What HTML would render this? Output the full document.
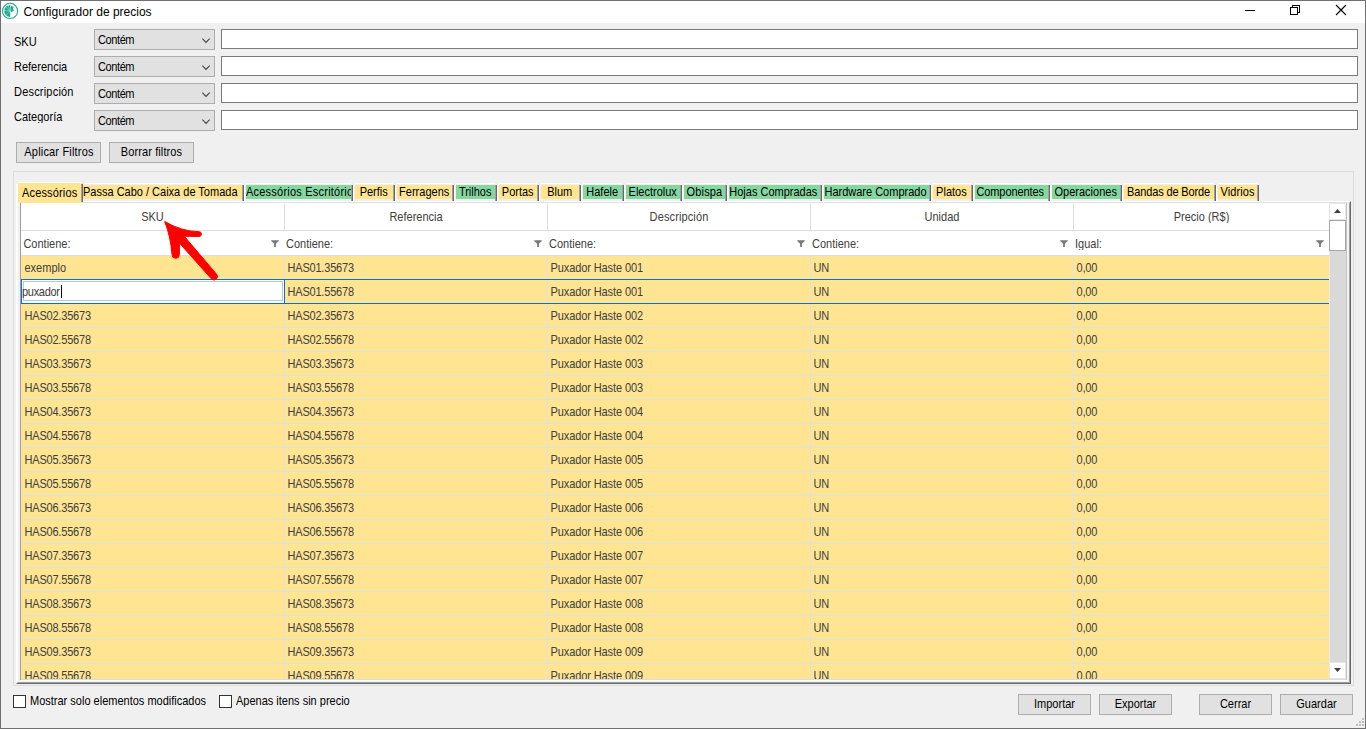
<!DOCTYPE html><html><head><meta charset="utf-8"><title>Configurador de precios</title><style>
*{box-sizing:border-box;margin:0;padding:0}
html,body{width:1366px;height:729px;overflow:hidden;background:#f0f0f0}
body{position:relative;font-family:"Liberation Sans",sans-serif;font-size:11px;color:#000;line-height:13px}
.a{position:absolute}
.t{position:absolute;white-space:nowrap;line-height:13px;height:13px;transform:scaleY(1.1);transform-origin:0 2px}
.combo{position:absolute;left:94px;width:121px;height:21px;background:#e1e1e1;border:1px solid #adadad}
.combo span{position:absolute;left:3px;top:3px;white-space:nowrap;letter-spacing:-0.4px;transform:scaleY(1.1);transform-origin:0 2px}
.combo svg{position:absolute;left:107px;top:8px}
.inp{position:absolute;left:221px;width:1137px;height:20px;background:#fff;border:1px solid #7a7a7a}
.btn{position:absolute;height:21px;background:#e1e1e1;border:1px solid #adadad;text-align:center;line-height:19px;white-space:nowrap}
.btn span{display:inline-block;transform:translateY(-1px) scaleY(1.1);transform-origin:50% 35%}
.fill span{display:inline-block;transform:translateY(-0.6px) scaleY(1.1);transform-origin:50% 35%}
.tab{position:absolute;top:183px;height:18px}
.tab .hl{position:absolute;left:0;top:2px;width:1px;bottom:0;background:#fff}
.tab .ht{position:absolute;left:2px;right:2px;top:0;height:1px;background:#fff}
.tab .fill{position:absolute;left:2px;right:2px;top:2px;height:14px;overflow:hidden;text-align:center;white-space:nowrap;line-height:14px}
.tab .g1{position:absolute;right:1px;top:2px;bottom:0;width:1px;background:#a0a0a0}
.tab .g2{position:absolute;right:0;top:2px;bottom:0;width:1px;background:#696969}
.hdr{position:absolute;top:203px;height:27px;text-align:center;line-height:27px;color:#404040;white-space:nowrap;transform:scaleY(1.1);transform-origin:50% 9px}
.flt{position:absolute;top:231px;height:24px;line-height:24px;color:#404040;white-space:nowrap;padding-left:1px;transform:scaleY(1.1);transform-origin:0 8px}
.row{position:absolute;left:21px;width:1308px;height:24px;background:#ffe492;border-bottom:1px solid #e0e0de}
.c{position:absolute;top:0;height:23px;line-height:23px;color:#404040;white-space:nowrap;padding-left:3.5px;letter-spacing:-0.2px;transform:scaleY(1.1);transform-origin:0 7px}
.c.d{letter-spacing:-0.1px}
.vs{position:absolute;width:1px;background:#dcdcdc}
</style></head><body>
<div class="a" style="left:1px;top:1px;width:1364px;height:22px;background:#fff"></div>
<svg class="a" style="left:1px;top:2px" width="19" height="19" viewBox="0 0 19 19">
<circle cx="9.05" cy="8.9" r="7.6" fill="#fff" stroke="#1aab8f" stroke-width="1.1"/>
<path d="M9.2 9 L9.2 2.9 A6 6 0 0 0 3.2 9 A6 6 0 0 0 9.2 15.1 Z" fill="#1aab8f"/>
<path d="M9.2 9 L9.9 3.6 L12.8 5.2 L11.8 6.6 L12.9 8.6 L10.6 9.9 Z" fill="#1aab8f"/>
<path d="M9.2 9 L4.6 4.6 M9.2 9 L3 8.6 M9.2 9 L5 13.4 M9.2 9 L7 3.2" stroke="#fff" stroke-width="0.5" fill="none" opacity=".8"/>
</svg>
<div class="t" style="left:23.5px;top:4px;font-size:12px;line-height:14px;height:14px">Configurador de precios</div>
<div class="a" style="left:1245px;top:10px;width:10px;height:1px;background:#000"></div>
<svg class="a" style="left:1289px;top:4px" width="12" height="12" viewBox="0 0 12 12" shape-rendering="crispEdges">
<rect x="1.5" y="3.5" width="7" height="7" fill="none" stroke="#000" stroke-width="1"/>
<path d="M3.5 3.5 V1.5 H10.5 V8.5 H8.5" fill="none" stroke="#000" stroke-width="1"/></svg>
<svg class="a" style="left:1335px;top:4px" width="12" height="12" viewBox="0 0 12 12">
<path d="M1 1 L11 11 M11 1 L1 11" stroke="#000" stroke-width="1.1" fill="none"/></svg>
<div class="t" style="left:14px;top:35px">SKU</div>
<div class="t" style="left:14px;top:60px">Referencia</div>
<div class="t" style="left:14px;top:85px;letter-spacing:0.2px">Descripción</div>
<div class="t" style="left:14px;top:110px">Categoría</div>
<div class="combo" style="top:29px"><span>Contém</span><svg width="8" height="6" viewBox="0 0 8 6"><path d="M0.3 0.6 L4 4.5 L7.7 0.6" stroke="#404040" stroke-width="1.15" fill="none"/></svg></div>
<div class="inp" style="top:29px"></div>
<div class="combo" style="top:56px"><span>Contém</span><svg width="8" height="6" viewBox="0 0 8 6"><path d="M0.3 0.6 L4 4.5 L7.7 0.6" stroke="#404040" stroke-width="1.15" fill="none"/></svg></div>
<div class="inp" style="top:56px"></div>
<div class="combo" style="top:83px"><span>Contém</span><svg width="8" height="6" viewBox="0 0 8 6"><path d="M0.3 0.6 L4 4.5 L7.7 0.6" stroke="#404040" stroke-width="1.15" fill="none"/></svg></div>
<div class="inp" style="top:83px"></div>
<div class="combo" style="top:110px"><span>Contém</span><svg width="8" height="6" viewBox="0 0 8 6"><path d="M0.3 0.6 L4 4.5 L7.7 0.6" stroke="#404040" stroke-width="1.15" fill="none"/></svg></div>
<div class="inp" style="top:110px"></div>
<div class="btn" style="left:16px;top:142px;width:85px"><span style="letter-spacing:0.18px;margin-left:1px">Aplicar Filtros</span></div>
<div class="btn" style="left:109px;top:142px;width:85px"><span style="letter-spacing:0.1px">Borrar filtros</span></div>
<div class="a" style="left:13px;top:171px;width:1341px;height:515px;border:1px solid #dcdcdc"></div>
<div class="a" style="left:16px;top:201px;width:1335px;height:483px;border-left:1px solid #fff;border-top:1px solid #fff;border-right:1px solid #696969;border-bottom:1px solid #696969"></div>
<div class="a" style="left:17px;top:202px;width:1333px;height:481px;border-left:1px solid #fcfcfc;border-top:1px solid #e0e0e0;border-right:1px solid #a0a0a0;border-bottom:1px solid #a0a0a0"></div>
<div class="a" style="left:18px;top:183px;width:65px;height:20px;background:#ffe492"></div>
<div class="a" style="left:16px;top:184px;width:2px;height:19px;background:#fff"></div>
<div class="a" style="left:18px;top:182px;width:63px;height:1px;background:#fff"></div>
<div class="a" style="left:81px;top:184px;width:1px;height:18px;background:#a0a0a0"></div>
<div class="a" style="left:82px;top:184px;width:1px;height:18px;background:#696969"></div>
<div class="t" style="left:22px;top:186px;letter-spacing:0.15px">Acessórios</div>
<div class="tab" style="left:83px;width:161px"><div class="hl"></div><div class="ht"></div><div class="fill" style="background:#ffe492;text-align:left;padding-left:0;left:0;"><span style="transform:translate(0,-0.6px) scaleY(1.1)">Passa Cabo / Caixa de Tomada</span></div><div class="g1"></div><div class="g2"></div></div>
<div class="tab" style="left:244px;width:109px"><div class="hl"></div><div class="ht"></div><div class="fill" style="background:#85d7a0;text-align:left;"><span style="transform:translate(0,-0.6px) scaleY(1.1);letter-spacing:0.22px">Acessórios Escritório</span></div><div class="g1"></div><div class="g2"></div></div>
<div class="tab" style="left:353px;width:42px"><div class="hl"></div><div class="ht"></div><div class="fill" style="background:#ffe492;"><span style="transform:translate(-0.3px,-0.6px) scaleY(1.1);letter-spacing:0px">Perfis</span></div><div class="g1"></div><div class="g2"></div></div>
<div class="tab" style="left:395px;width:59px"><div class="hl"></div><div class="ht"></div><div class="fill" style="background:#ffe492;"><span style="transform:translate(-0.3px,-0.6px) scaleY(1.1);letter-spacing:0px">Ferragens</span></div><div class="g1"></div><div class="g2"></div></div>
<div class="tab" style="left:454px;width:43px"><div class="hl"></div><div class="ht"></div><div class="fill" style="background:#85d7a0;"><span style="transform:translate(-0.3px,-0.6px) scaleY(1.1);letter-spacing:0px">Trilhos</span></div><div class="g1"></div><div class="g2"></div></div>
<div class="tab" style="left:497px;width:42px"><div class="hl"></div><div class="ht"></div><div class="fill" style="background:#ffe492;"><span style="transform:translate(-0.3px,-0.6px) scaleY(1.1);letter-spacing:0px">Portas</span></div><div class="g1"></div><div class="g2"></div></div>
<div class="tab" style="left:539px;width:42px"><div class="hl"></div><div class="ht"></div><div class="fill" style="background:#ffe492;"><span style="transform:translate(-0.3px,-0.6px) scaleY(1.1);letter-spacing:0px">Blum</span></div><div class="g1"></div><div class="g2"></div></div>
<div class="tab" style="left:581px;width:43px"><div class="hl"></div><div class="ht"></div><div class="fill" style="background:#85d7a0;"><span style="transform:translate(-0.3px,-0.6px) scaleY(1.1);letter-spacing:0px">Hafele</span></div><div class="g1"></div><div class="g2"></div></div>
<div class="tab" style="left:624px;width:58px"><div class="hl"></div><div class="ht"></div><div class="fill" style="background:#85d7a0;"><span style="transform:translate(-0.3px,-0.6px) scaleY(1.1);letter-spacing:0px">Electrolux</span></div><div class="g1"></div><div class="g2"></div></div>
<div class="tab" style="left:682px;width:45px"><div class="hl"></div><div class="ht"></div><div class="fill" style="background:#85d7a0;"><span style="transform:translate(0px,-0.6px) scaleY(1.1);letter-spacing:0.15px">Obispa</span></div><div class="g1"></div><div class="g2"></div></div>
<div class="tab" style="left:727px;width:95px"><div class="hl"></div><div class="ht"></div><div class="fill" style="background:#85d7a0;"><span style="transform:translate(-1.2px,-0.6px) scaleY(1.1);letter-spacing:0px">Hojas Compradas</span></div><div class="g1"></div><div class="g2"></div></div>
<div class="tab" style="left:822px;width:109px"><div class="hl"></div><div class="ht"></div><div class="fill" style="background:#85d7a0;"><span style="transform:translate(-1px,-0.6px) scaleY(1.1);letter-spacing:0px">Hardware Comprado</span></div><div class="g1"></div><div class="g2"></div></div>
<div class="tab" style="left:931px;width:42px"><div class="hl"></div><div class="ht"></div><div class="fill" style="background:#ffe492;"><span style="transform:translate(-0.6px,-0.6px) scaleY(1.1);letter-spacing:0px">Platos</span></div><div class="g1"></div><div class="g2"></div></div>
<div class="tab" style="left:973px;width:77px"><div class="hl"></div><div class="ht"></div><div class="fill" style="background:#85d7a0;"><span style="transform:translate(-1.3px,-0.6px) scaleY(1.1);letter-spacing:-0.08px">Componentes</span></div><div class="g1"></div><div class="g2"></div></div>
<div class="tab" style="left:1050px;width:72px"><div class="hl"></div><div class="ht"></div><div class="fill" style="background:#85d7a0;"><span style="transform:translate(-0.3px,-0.6px) scaleY(1.1);letter-spacing:0px">Operaciones</span></div><div class="g1"></div><div class="g2"></div></div>
<div class="tab" style="left:1122px;width:94px"><div class="hl"></div><div class="ht"></div><div class="fill" style="background:#ffe492;"><span style="transform:translate(-0.5px,-0.6px) scaleY(1.1);letter-spacing:-0.15px">Bandas de Borde</span></div><div class="g1"></div><div class="g2"></div></div>
<div class="tab" style="left:1216px;width:43px"><div class="hl"></div><div class="ht"></div><div class="fill" style="background:#ffe492;"><span style="transform:translate(0px,-0.6px) scaleY(1.1);letter-spacing:0.1px">Vidrios</span></div><div class="g1"></div><div class="g2"></div></div>
<div class="a" style="left:20px;top:203px;width:1px;height:477px;background:#a0a0a0"></div>
<div class="a" style="left:21px;top:203px;width:1308px;height:53px;background:#fff"></div>
<div class="a" style="left:21px;top:230px;width:1308px;height:1px;background:#dcdcdc"></div>
<div class="a" style="left:21px;top:255px;width:1308px;height:1px;background:#dcdcdc"></div>
<div class="hdr" style="left:21px;width:263px">SKU</div>
<div class="flt" style="left:21px;width:263px;padding-left:2.4px">Contiene:</div>
<div class="a" style="left:271px;top:240px;line-height:0"><svg width="8" height="7" viewBox="0 0 8 7"><path d="M0.2 0.2 H7.8 V1 L4.9 3.8 V7 H3.1 V3.8 L0.2 1 Z" fill="#7a7a7a"/></svg></div>
<div class="vs" style="left:284px;top:204px;height:26px"></div>
<div class="hdr" style="left:285px;width:262px">Referencia</div>
<div class="flt" style="left:285px;width:262px">Contiene:</div>
<div class="a" style="left:534px;top:240px;line-height:0"><svg width="8" height="7" viewBox="0 0 8 7"><path d="M0.2 0.2 H7.8 V1 L4.9 3.8 V7 H3.1 V3.8 L0.2 1 Z" fill="#7a7a7a"/></svg></div>
<div class="vs" style="left:547px;top:204px;height:26px"></div>
<div class="hdr" style="left:548px;width:262px;letter-spacing:0.12px">Descripción</div>
<div class="flt" style="left:548px;width:262px">Contiene:</div>
<div class="a" style="left:797px;top:240px;line-height:0"><svg width="8" height="7" viewBox="0 0 8 7"><path d="M0.2 0.2 H7.8 V1 L4.9 3.8 V7 H3.1 V3.8 L0.2 1 Z" fill="#7a7a7a"/></svg></div>
<div class="vs" style="left:810px;top:204px;height:26px"></div>
<div class="hdr" style="left:811px;width:262px">Unidad</div>
<div class="flt" style="left:811px;width:262px">Contiene:</div>
<div class="a" style="left:1060px;top:240px;line-height:0"><svg width="8" height="7" viewBox="0 0 8 7"><path d="M0.2 0.2 H7.8 V1 L4.9 3.8 V7 H3.1 V3.8 L0.2 1 Z" fill="#7a7a7a"/></svg></div>
<div class="vs" style="left:1073px;top:204px;height:26px"></div>
<div class="hdr" style="left:1074px;width:255px">Precio (R$)</div>
<div class="flt" style="left:1074px;width:255px">Igual:</div>
<div class="a" style="left:1316px;top:240px;line-height:0"><svg width="8" height="7" viewBox="0 0 8 7"><path d="M0.2 0.2 H7.8 V1 L4.9 3.8 V7 H3.1 V3.8 L0.2 1 Z" fill="#7a7a7a"/></svg></div>
<div class="a" style="left:0;top:0;width:1366px;height:679px;overflow:hidden">
<div class="row" style="top:256px"><div class="c" style="left:0;letter-spacing:0">exemplo</div><div class="c" style="left:263px">HAS01.35673</div><div class="c d" style="left:526px">Puxador Haste 001</div><div class="c" style="left:789px">UN</div><div class="c" style="left:1052px">0,00</div></div>
<div class="row" style="top:280px"><div class="c" style="left:0"></div><div class="c" style="left:263px">HAS01.55678</div><div class="c d" style="left:526px">Puxador Haste 001</div><div class="c" style="left:789px">UN</div><div class="c" style="left:1052px">0,00</div></div>
<div class="row" style="top:304px"><div class="c" style="left:0">HAS02.35673</div><div class="c" style="left:263px">HAS02.35673</div><div class="c d" style="left:526px">Puxador Haste 002</div><div class="c" style="left:789px">UN</div><div class="c" style="left:1052px">0,00</div></div>
<div class="row" style="top:328px"><div class="c" style="left:0">HAS02.55678</div><div class="c" style="left:263px">HAS02.55678</div><div class="c d" style="left:526px">Puxador Haste 002</div><div class="c" style="left:789px">UN</div><div class="c" style="left:1052px">0,00</div></div>
<div class="row" style="top:352px"><div class="c" style="left:0">HAS03.35673</div><div class="c" style="left:263px">HAS03.35673</div><div class="c d" style="left:526px">Puxador Haste 003</div><div class="c" style="left:789px">UN</div><div class="c" style="left:1052px">0,00</div></div>
<div class="row" style="top:376px"><div class="c" style="left:0">HAS03.55678</div><div class="c" style="left:263px">HAS03.55678</div><div class="c d" style="left:526px">Puxador Haste 003</div><div class="c" style="left:789px">UN</div><div class="c" style="left:1052px">0,00</div></div>
<div class="row" style="top:400px"><div class="c" style="left:0">HAS04.35673</div><div class="c" style="left:263px">HAS04.35673</div><div class="c d" style="left:526px">Puxador Haste 004</div><div class="c" style="left:789px">UN</div><div class="c" style="left:1052px">0,00</div></div>
<div class="row" style="top:424px"><div class="c" style="left:0">HAS04.55678</div><div class="c" style="left:263px">HAS04.55678</div><div class="c d" style="left:526px">Puxador Haste 004</div><div class="c" style="left:789px">UN</div><div class="c" style="left:1052px">0,00</div></div>
<div class="row" style="top:448px"><div class="c" style="left:0">HAS05.35673</div><div class="c" style="left:263px">HAS05.35673</div><div class="c d" style="left:526px">Puxador Haste 005</div><div class="c" style="left:789px">UN</div><div class="c" style="left:1052px">0,00</div></div>
<div class="row" style="top:472px"><div class="c" style="left:0">HAS05.55678</div><div class="c" style="left:263px">HAS05.55678</div><div class="c d" style="left:526px">Puxador Haste 005</div><div class="c" style="left:789px">UN</div><div class="c" style="left:1052px">0,00</div></div>
<div class="row" style="top:496px"><div class="c" style="left:0">HAS06.35673</div><div class="c" style="left:263px">HAS06.35673</div><div class="c d" style="left:526px">Puxador Haste 006</div><div class="c" style="left:789px">UN</div><div class="c" style="left:1052px">0,00</div></div>
<div class="row" style="top:520px"><div class="c" style="left:0">HAS06.55678</div><div class="c" style="left:263px">HAS06.55678</div><div class="c d" style="left:526px">Puxador Haste 006</div><div class="c" style="left:789px">UN</div><div class="c" style="left:1052px">0,00</div></div>
<div class="row" style="top:544px"><div class="c" style="left:0">HAS07.35673</div><div class="c" style="left:263px">HAS07.35673</div><div class="c d" style="left:526px">Puxador Haste 007</div><div class="c" style="left:789px">UN</div><div class="c" style="left:1052px">0,00</div></div>
<div class="row" style="top:568px"><div class="c" style="left:0">HAS07.55678</div><div class="c" style="left:263px">HAS07.55678</div><div class="c d" style="left:526px">Puxador Haste 007</div><div class="c" style="left:789px">UN</div><div class="c" style="left:1052px">0,00</div></div>
<div class="row" style="top:592px"><div class="c" style="left:0">HAS08.35673</div><div class="c" style="left:263px">HAS08.35673</div><div class="c d" style="left:526px">Puxador Haste 008</div><div class="c" style="left:789px">UN</div><div class="c" style="left:1052px">0,00</div></div>
<div class="row" style="top:616px"><div class="c" style="left:0">HAS08.55678</div><div class="c" style="left:263px">HAS08.55678</div><div class="c d" style="left:526px">Puxador Haste 008</div><div class="c" style="left:789px">UN</div><div class="c" style="left:1052px">0,00</div></div>
<div class="row" style="top:640px"><div class="c" style="left:0">HAS09.35673</div><div class="c" style="left:263px">HAS09.35673</div><div class="c d" style="left:526px">Puxador Haste 009</div><div class="c" style="left:789px">UN</div><div class="c" style="left:1052px">0,00</div></div>
<div class="row" style="top:664px"><div class="c" style="left:0">HAS09.55678</div><div class="c" style="left:263px">HAS09.55678</div><div class="c d" style="left:526px">Puxador Haste 009</div><div class="c" style="left:789px">UN</div><div class="c" style="left:1052px">0,00</div></div>
<div class="vs" style="left:284px;top:256px;height:424px;background:#e0e0de"></div>
<div class="vs" style="left:547px;top:256px;height:424px;background:#e0e0de"></div>
<div class="vs" style="left:810px;top:256px;height:424px;background:#e0e0de"></div>
<div class="vs" style="left:1073px;top:256px;height:424px;background:#e0e0de"></div>
</div>
<div class="a" style="left:21px;top:279px;width:1308px;height:1px;background:#0f6fc6"></div>
<div class="a" style="left:21px;top:303px;width:1308px;height:1px;background:#0f6fc6"></div>
<div class="a" style="left:21px;top:279px;width:264px;height:25px;background:#fff;border:1px solid #0f6fc6"></div>
<div class="a" style="left:23px;top:281px;width:260px;height:20px;background:#fff;border:1px solid #a8cbea"></div>
<div class="t" style="left:22px;top:285px;color:#404040;letter-spacing:-0.3px">puxador</div>
<div class="a" style="left:61px;top:285px;width:1px;height:13px;background:#000"></div>
<div class="a" style="left:21px;top:679px;width:1326px;height:1px;background:#dcdcdc"></div>
<div class="a" style="left:21px;top:680px;width:1326px;height:1px;background:#fff"></div>
<div class="a" style="left:1329px;top:203px;width:17px;height:476px;background:#d9d9d9;border-left:1px solid #ebebeb"></div>
<div class="a" style="left:1329px;top:203px;width:17px;height:17px;background:#fff;border:1px solid #e6e6e6"></div>
<svg class="a" style="left:1334px;top:209px" width="7" height="4" viewBox="0 0 7 4"><path d="M0 4 L3.5 0 L7 4 Z" fill="#404040"/></svg>
<div class="a" style="left:1329px;top:220px;width:17px;height:31px;background:#fff;border:1px solid #a6a6a6"></div>
<div class="a" style="left:1329px;top:662px;width:17px;height:17px;background:#fff;border:1px solid #e6e6e6"></div>
<svg class="a" style="left:1334px;top:668px" width="7" height="4" viewBox="0 0 7 4"><path d="M0 0 L3.5 4 L7 0 Z" fill="#404040"/></svg>
<div class="a" style="left:1346px;top:203px;width:1px;height:477px;background:#c4c4c4"></div>
<div class="a" style="left:1347px;top:203px;width:2px;height:478px;background:#f4f4f4"></div>
<svg class="a" style="left:150px;top:210px" width="80" height="80" viewBox="150 210 80 80">
<path d="M164.6 221.4 Q181.6 231.5 199.2 231.7 A2.4 2.4 0 0 1 198.8 236.5 L184.3 236.2 L216.8 274.5 A3.5 3.5 0 0 1 211.6 279.1 L179.4 243 L179.4 254.6 A3.7 3.7 0 0 1 172 254.6 Q170.6 236.1 164.6 221.4 Z" fill="#ff0000" stroke="#ff0000" stroke-width="1" stroke-linejoin="round"/>
</svg>
<div class="a" style="left:13px;top:695px;width:13px;height:13px;background:#fff;border:1px solid #333"></div>
<div class="t" style="left:30px;top:694px">Mostrar solo elementos modificados</div>
<div class="a" style="left:219px;top:695px;width:13px;height:13px;background:#fff;border:1px solid #333"></div>
<div class="t" style="left:236px;top:694px">Apenas itens sin precio</div>
<div class="btn" style="left:1018px;top:694px;width:73px"><span>Importar</span></div>
<div class="btn" style="left:1099px;top:694px;width:73px"><span>Exportar</span></div>
<div class="btn" style="left:1199px;top:694px;width:73px"><span>Cerrar</span></div>
<div class="btn" style="left:1280px;top:694px;width:73px"><span>Guardar</span></div>
<div class="a" style="left:1362px;top:718px;width:2px;height:2px;background:#bfbfbf"></div><div class="a" style="left:1359px;top:721px;width:2px;height:2px;background:#bfbfbf"></div><div class="a" style="left:1362px;top:721px;width:2px;height:2px;background:#bfbfbf"></div><div class="a" style="left:1356px;top:724px;width:2px;height:2px;background:#bfbfbf"></div><div class="a" style="left:1359px;top:724px;width:2px;height:2px;background:#bfbfbf"></div><div class="a" style="left:1362px;top:724px;width:2px;height:2px;background:#bfbfbf"></div>
<div class="a" style="left:0;top:0;width:1366px;height:729px;border:1px solid #707070"></div>
</body></html>
